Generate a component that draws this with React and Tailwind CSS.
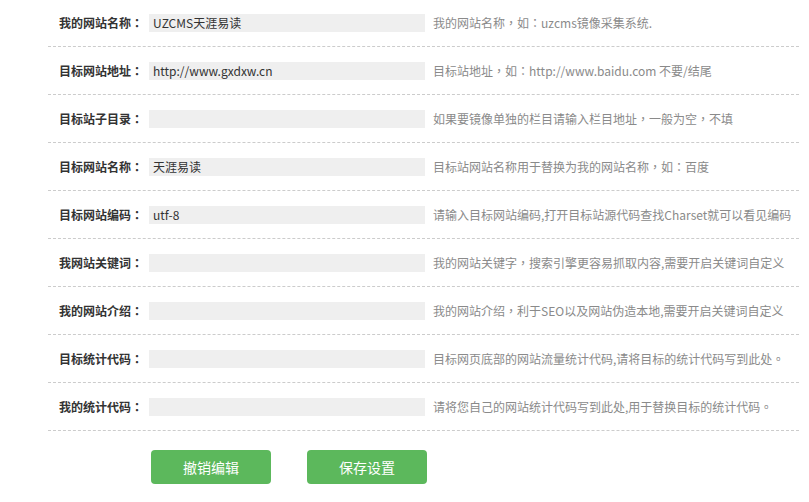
import React from "react";

const rows = [
  { label: "我的网站名称", value: "UZCMS天涯易读", hint: "我的网站名称，如：uzcms镜像采集系统." },
  { label: "目标网站地址", value: "http://www.gxdxw.cn", hint: "目标站地址，如：http://www.baidu.com 不要/结尾" },
  { label: "目标站子目录", value: "", hint: "如果要镜像单独的栏目请输入栏目地址，一般为空，不填" },
  { label: "目标网站名称", value: "天涯易读", hint: "目标站网站名称用于替换为我的网站名称，如：百度" },
  { label: "目标网站编码", value: "utf-8", hint: "请输入目标网站编码,打开目标站源代码查找Charset就可以看见编码" },
  { label: "我网站关键词", value: "", hint: "我的网站关键字，搜索引擎更容易抓取内容,需要开启关键词自定义" },
  { label: "我的网站介绍", value: "", hint: "我的网站介绍，利于SEO以及网站伪造本地,需要开启关键词自定义" },
  { label: "目标统计代码", value: "", hint: "目标网页底部的网站流量统计代码,请将目标的统计代码写到此处。" },
  { label: "我的统计代码", value: "", hint: "请将您自己的网站统计代码写到此处,用于替换目标的统计代码。" },
];

const tcFont = { fontFamily: '"Noto Sans CJK TC", sans-serif' };

// 全角标点按居中方式显示
const Punct = ({ text }) =>
  text.split(/([，：。])/).map((part, i) =>
    /^[，：。]$/.test(part) ? (
      <span key={i} style={tcFont}>
        {part}
      </span>
    ) : (
      part
    )
  );

export default function App() {
  return (
    <div
      className="w-[809px] h-[502px] bg-white overflow-hidden text-[12px] text-[#333]"
      style={{ fontFamily: '"Microsoft YaHei", "Noto Sans CJK SC", sans-serif' }}
    >
      <div className="ml-[48px] w-[751px] -mt-[1px]">
        {rows.map((r) => (
          <div
            key={r.label}
            className="flex items-center h-[48px] border-b border-dashed border-[#cccccc]"
          >
            <div className="w-[101px] pl-[11px] font-bold text-[#333] whitespace-nowrap">
              {r.label}
              <span style={tcFont}>：</span>
            </div>
            <div className="w-[276px] h-[18px] bg-[#efefef] pl-[4px] leading-[18px] text-[#333] whitespace-nowrap overflow-hidden">
              {r.value}
            </div>
            <div className="ml-[8px] text-[#8a8a8a] whitespace-nowrap">
              <Punct text={r.hint} />
            </div>
          </div>
        ))}
      </div>
      <div className="flex gap-[36px] ml-[151px] mt-[19px]">
        <button className="w-[120px] h-[34px] rounded-[4px] bg-[#5cb85c] text-white text-[14px]">
          撤销编辑
        </button>
        <button className="w-[120px] h-[34px] rounded-[4px] bg-[#5cb85c] text-white text-[14px]">
          保存设置
        </button>
      </div>
    </div>
  );
}
